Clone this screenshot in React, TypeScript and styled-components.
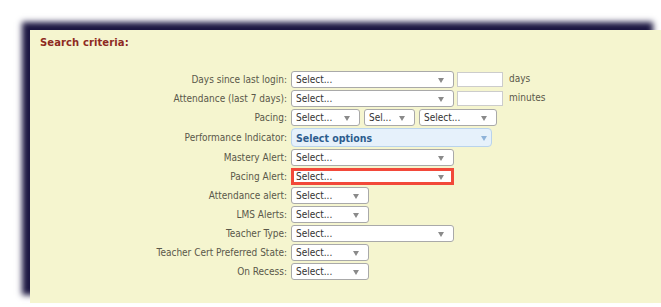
import React from "react";
import styled, { createGlobalStyle } from "styled-components";

const Global = createGlobalStyle`
  html, body { margin: 0; padding: 0; background: #ffffff; }
  body { width: 661px; height: 307px; overflow: hidden; font-family: "DejaVu Sans", Verdana, sans-serif; }
`;

const Panel = styled.div`
  margin: 30px 0 0 30px;
  width: 631px;
  height: 273px;
  background: #f5f5cf;
  box-shadow: -8px -8px 6px #1c1742;
  box-sizing: border-box;
  padding: 7px 10px 0 10px;
`;

const Title = styled.div`
  font-family: "DejaVu Sans", Verdana, sans-serif;
  font-weight: bold;
  font-size: 10px;
  color: #8e2a22;
  letter-spacing: 0.1px;
  height: 34px;
`;

const Form = styled.div`
  display: flex;
  flex-direction: column;
`;

const Row = styled.div<{ $h?: number }>`
  display: flex;
  align-items: flex-start;
  height: ${(p) => p.$h ?? 19}px;
`;

const Label = styled.div<{ $tall?: boolean }>`
  width: 251px;
  padding-right: 4px;
  box-sizing: border-box;
  text-align: right;
  font-size: 10px;
  font-stretch: condensed;
  color: #5a584a;
  line-height: ${(p) => (p.$tall ? 19 : 17)}px;
  white-space: nowrap;
`;

const Controls = styled.div`
  display: flex;
  align-items: flex-start;
  gap: 4px;
`;

const Select = styled.div<{ $w: number; $alert?: boolean }>`
  position: relative;
  width: ${(p) => p.$w}px;
  height: 17px;
  box-sizing: border-box;
  background: #ffffff;
  border: ${(p) => (p.$alert ? "3px solid #f2493a" : "1px solid #a9a9a9")};
  border-radius: ${(p) => (p.$alert ? 0 : 3)}px;
  display: flex;
  align-items: center;
  padding-left: ${(p) => (p.$alert ? 2 : 4)}px;
  font-size: 10px;
  font-stretch: condensed;
  color: #333333;
  overflow: hidden;
  white-space: nowrap;
`;

const Arrow = styled.span<{ $right: number; $color?: string }>`
  position: absolute;
  right: ${(p) => p.$right}px;
  top: 50%;
  margin-top: -2px;
  width: 0;
  height: 0;
  border-left: 3.5px solid transparent;
  border-right: 3.5px solid transparent;
  border-top: 5px solid ${(p) => p.$color ?? "#8a8a8a"};
`;

const Multi = styled.div`
  position: relative;
  width: 201px;
  height: 19px;
  box-sizing: border-box;
  background: #e6f1fb;
  border: 1px solid #b9d3ec;
  border-radius: 4px;
  display: flex;
  align-items: center;
  padding-left: 4px;
  font-size: 10.5px;
  font-weight: bold;
  font-stretch: condensed;
  color: #2d5c8e;
`;

const TextInput = styled.div`
  width: 46px;
  height: 15px;
  margin-top: 1px;
  margin-left: -1px;
  box-sizing: border-box;
  background: #ffffff;
  border: 1px solid #cccccc;
`;

const Unit = styled.span`
  font-size: 10px;
  font-stretch: condensed;
  color: #5a584a;
  line-height: 15px;
  margin-left: 2px;
`;

type Sel = { w: number; text?: string; arrow?: number; alert?: boolean };

const SelectBox = ({ w, text = "Select...", arrow = 9, alert }: Sel) => (
  <Select $w={w} $alert={alert}>
    {text}
    <Arrow $right={alert ? arrow - 2 : arrow} />
  </Select>
);

export default function App() {
  return (
    <>
      <Global />
      <Panel>
        <Title>Search criteria:</Title>
        <Form>
          <Row>
            <Label>Days since last login:</Label>
            <Controls>
              <SelectBox w={163} />
              <TextInput />
              <Unit>days</Unit>
            </Controls>
          </Row>
          <Row>
            <Label>Attendance (last 7 days):</Label>
            <Controls>
              <SelectBox w={163} />
              <TextInput />
              <Unit>minutes</Unit>
            </Controls>
          </Row>
          <Row>
            <Label>Pacing:</Label>
            <Controls>
              <SelectBox w={69} />
              <SelectBox w={51} text="Sel..." />
              <SelectBox w={78} />
            </Controls>
          </Row>
          <Row $h={21}>
            <Label $tall>Performance Indicator:</Label>
            <Controls>
              <Multi>
                Select options
                <Arrow $right={4} $color="#8fb3d9" />
              </Multi>
            </Controls>
          </Row>
          <Row>
            <Label>Mastery Alert:</Label>
            <Controls>
              <SelectBox w={163} />
            </Controls>
          </Row>
          <Row>
            <Label>Pacing Alert:</Label>
            <Controls>
              <SelectBox w={163} alert />
            </Controls>
          </Row>
          <Row>
            <Label>Attendance alert:</Label>
            <Controls>
              <SelectBox w={78} />
            </Controls>
          </Row>
          <Row>
            <Label>LMS Alerts:</Label>
            <Controls>
              <SelectBox w={78} />
            </Controls>
          </Row>
          <Row>
            <Label>Teacher Type:</Label>
            <Controls>
              <SelectBox w={163} />
            </Controls>
          </Row>
          <Row>
            <Label>Teacher Cert Preferred State:</Label>
            <Controls>
              <SelectBox w={78} />
            </Controls>
          </Row>
          <Row>
            <Label>On Recess:</Label>
            <Controls>
              <SelectBox w={78} />
            </Controls>
          </Row>
        </Form>
      </Panel>
    </>
  );
}
